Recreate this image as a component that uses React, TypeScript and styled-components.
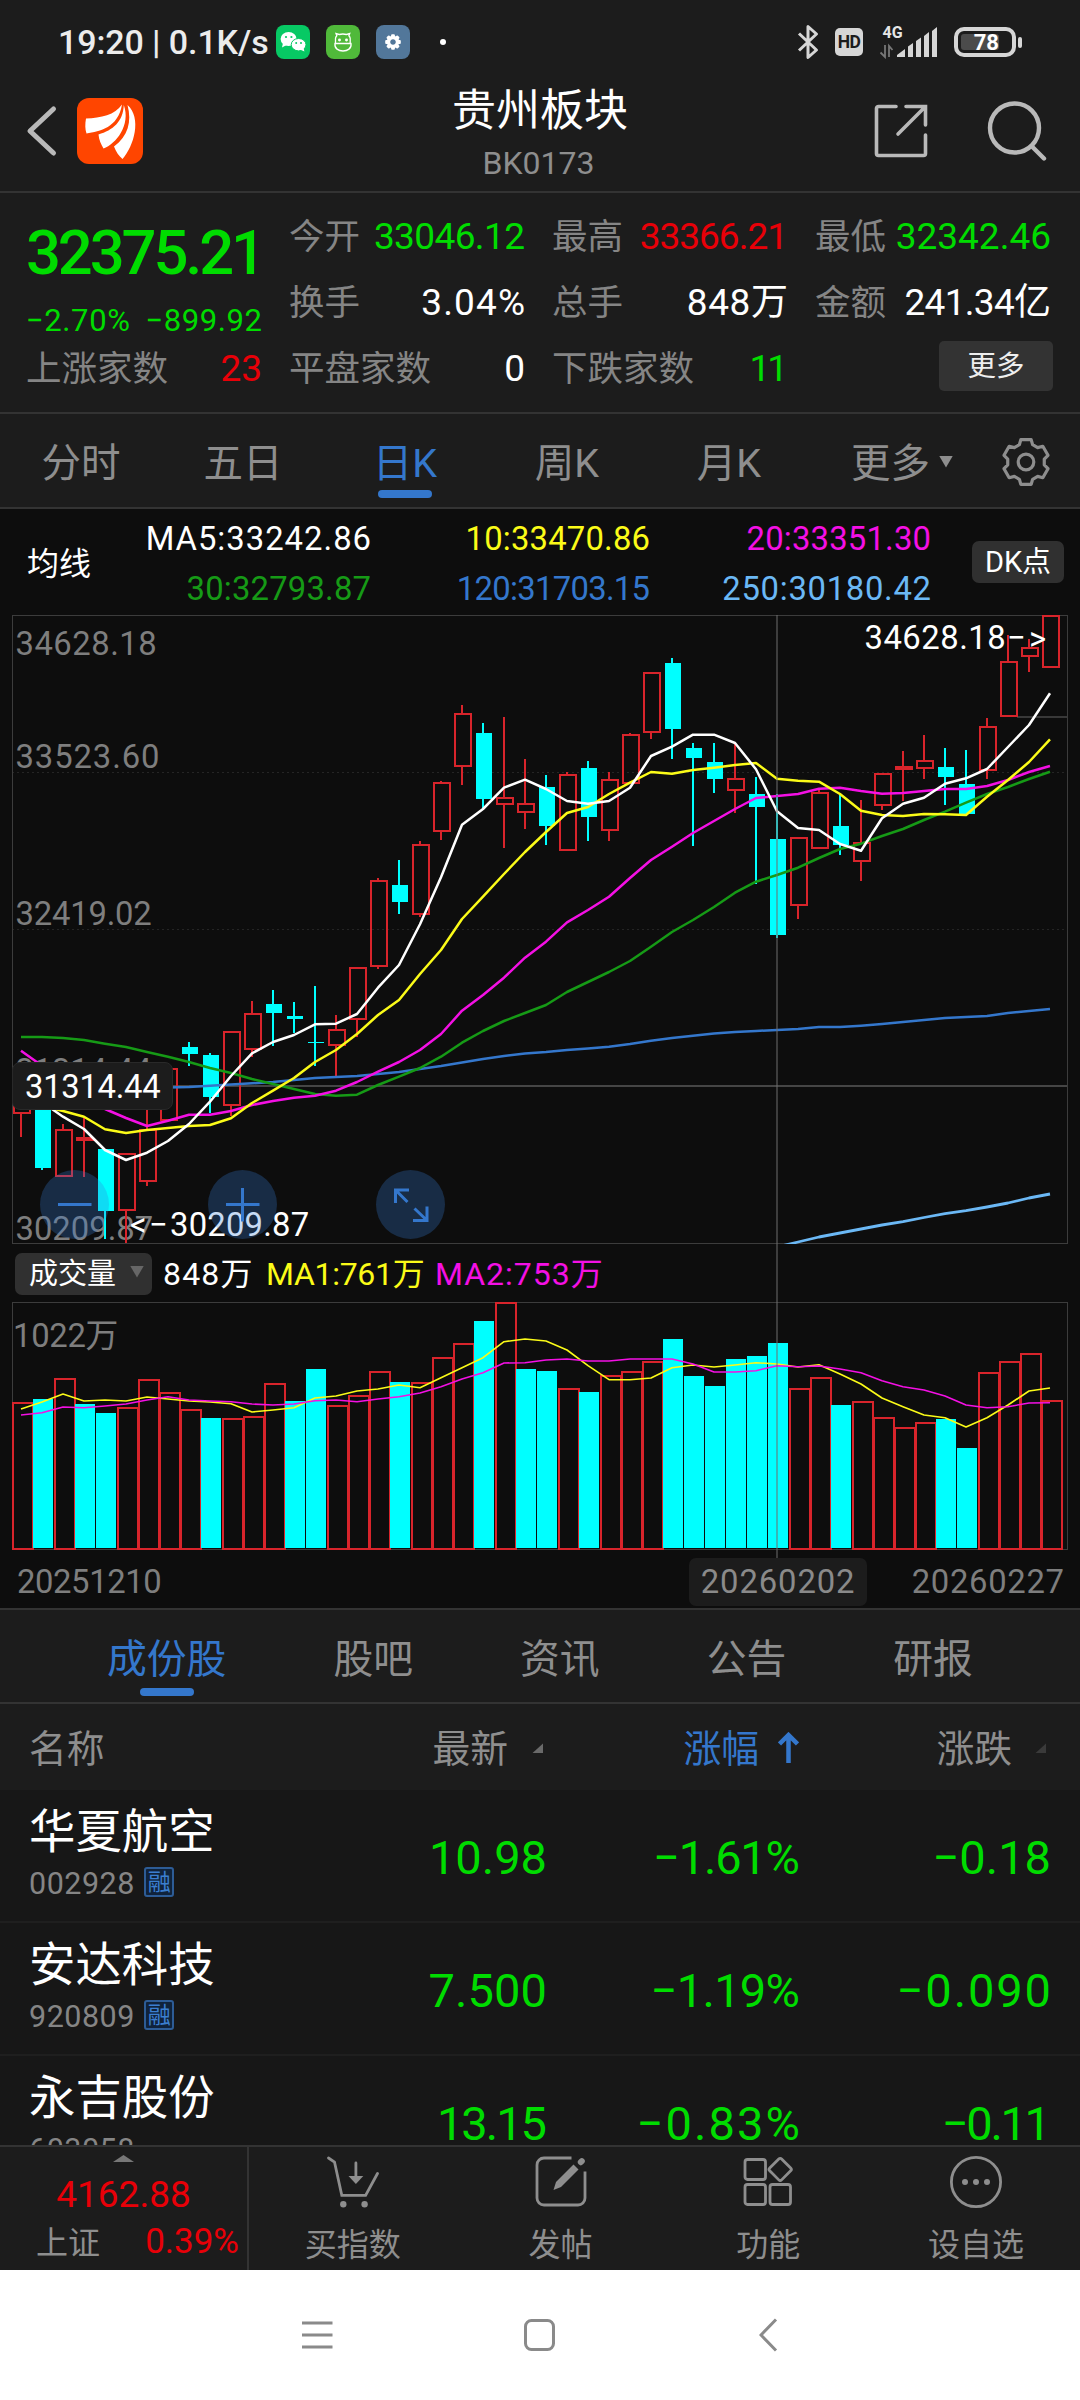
import React from "react";
import styled, { createGlobalStyle, css } from "styled-components";

const C = {
  panel: "#1c1c1c",
  chart: "#0d0d0d",
  row: "#171717",
  line: "#333333",
  gray: "#8e8e8e",
  label: "#858585",
  green: "#00dc00",
  red: "#e80008",
  blue: "#3477cc",
  white: "#ffffff",
  yellow: "#fbfb18",
  magenta: "#f410e4",
  darkGreen: "#169a16",
  sky: "#6bb8f5",
  cyan: "#00ffff",
  candle: "#d8242b",
};

const FONT = `Roboto, "Noto Sans CJK SC", sans-serif`;

const GlobalStyle = createGlobalStyle`
  * { box-sizing: border-box; }
  body { margin: 0; background: ${C.panel}; font-family: ${FONT}; }
`;

/* ---------- primitives ---------- */

const Screen = styled.div`
  width: 1080px;
  height: 2400px;
  overflow: hidden;
  display: flex;
  flex-direction: column;
  background: ${C.panel};
  white-space: nowrap;
`;

const Num = styled.span<{ $size: number; $color: string; $ls?: number; $weight?: number }>`
  font-size: ${(p) => p.$size}px;
  line-height: 1;
  color: ${(p) => p.$color};
  font-weight: ${(p) => p.$weight ?? 400};
  letter-spacing: ${(p) => p.$ls ?? 0}px;
  margin-right: ${(p) => -(p.$ls ?? 0)}px;
`;

const Cjk = styled.span<{ $size: number; $color?: string }>`
  font-size: ${(p) => p.$size}px;
  line-height: 1;
  padding-top: 3px;
  color: ${(p) => p.$color ?? C.gray};
`;

/* ---------- status bar ---------- */

const StatusBar = styled.div`
  height: 84px;
  flex: none;
  display: flex;
  align-items: center;
  justify-content: space-between;
  padding: 0 58px 0 58px;
`;
const StatusGroup = styled.div`
  display: flex;
  align-items: center;
`;
const AppTile = styled.div<{ $bg: string; $ml: number }>`
  width: 34px;
  height: 34px;
  border-radius: 8px;
  background: ${(p) => p.$bg};
  margin-left: ${(p) => p.$ml}px;
`;
const Dot = styled.div`
  width: 6px;
  height: 6px;
  border-radius: 3px;
  background: #fff;
  margin-left: 30px;
`;
const HdBox = styled.div`
  width: 28px;
  height: 28px;
  border-radius: 5px;
  background: #d6d6d6;
  color: #1c1c1c;
  font-size: 17.5px;
  font-weight: 700;
  line-height: 29px;
  text-align: center;
  letter-spacing: -0.6px;
  margin-left: 16px;
`;
const Battery = styled.div`
  width: 62px;
  height: 30px;
  border: 4px solid #d6d6d6;
  border-radius: 10px;
  padding: 3px;
  display: flex;
  margin-left: 16px;
`;
const BatteryFill = styled.div`
  width: 38px;
  background: #4b4b4b;
  border-radius: 3px;
  color: #fff;
  font-size: 22px;
  line-height: 17px;
  font-weight: 700;
  text-align: right;
`;
const Nub = styled.div`
  width: 4px;
  height: 11px;
  border-radius: 2px;
  background: #d6d6d6;
  margin-left: 2px;
`;

function Status() {
  return (
    <StatusBar>
      <StatusGroup>
        <Num $size={34} $color="#ececec" $weight={500} $ls={-0.1}>19:20 | 0.1K/s</Num>
        <AppTile $bg="#07c964" $ml={7}>
          <svg width="34" height="34" viewBox="0 0 34 34">
            <ellipse cx="12.6" cy="14" rx="8" ry="6.9" fill="#fff" />
            <path d="M7 18l-1 4.4 4.6-2.4z" fill="#fff" />
            <ellipse cx="22.6" cy="19.7" rx="7.4" ry="6.2" fill="#fff" stroke="#07c964" strokeWidth="1" />
            <path d="M24 24.5l4.4 2-.9-4z" fill="#fff" />
            <circle cx="10" cy="12" r="1.1" fill="#07c964" />
            <circle cx="15.4" cy="12" r="1.1" fill="#07c964" />
            <circle cx="20.2" cy="18" r="1" fill="#07c964" />
            <circle cx="25" cy="18" r="1" fill="#07c964" />
          </svg>
        </AppTile>
        <AppTile $bg="#50b93a" $ml={16}>
          <svg width="34" height="34" viewBox="0 0 34 34" fill="none" stroke="#fff" strokeWidth="1.3">
            <path d="M9.5 19v-5.5c0-1 .5-2 1.3-2.8L10 8.6l3.2.9c2.3-.6 5-.6 7.3 0l3.2-.9-.8 2.100c.8.8 1.300 1.800 1.300 2.800V19" />
            <path d="M9 18.500h16c.8 5-3.500 7.500-8 7.500s-8.800-2.500-8-7.500z" />
            <circle cx="13.500" cy="15" r=".8" fill="#fff" />
            <circle cx="20.500" cy="15" r=".8" fill="#fff" />
          </svg>
        </AppTile>
        <AppTile $bg="#52779a" $ml={16}>
          <svg width="34" height="34" viewBox="-17 -17 34 34">
            {[0, 45, 90, 135].map((a) => (
              <rect key={a} x="-1.900" y="-7.800" width="3.800" height="15.600" rx="1" fill="#fff" transform={`rotate(${a})`} />
            ))}
            <circle r="4.500" fill="#52779a" stroke="#fff" strokeWidth="3.400" />
          </svg>
        </AppTile>
        <Dot />
      </StatusGroup>
      <StatusGroup>
        <svg width="22" height="36" viewBox="0 0 22 36" fill="none" stroke="#d6d6d6" strokeWidth="3" strokeLinejoin="round">
          <path d="M2 9.500L19.500 26 11 33.500V2.500l8.500 7.500L2 26.500" />
        </svg>
        <HdBox>HD</HdBox>
        <svg width="59" height="34" viewBox="880 24 59 34" style={{ marginLeft: 16 }}>
          <text x="883.500" y="37" fontSize="16" fontWeight="700" fill="#e6e6e6" fontFamily="Roboto">4G</text>
          <path d="M886 44v12l-4.500-4.500M890 56V45l3.500 4" stroke="#777" strokeWidth="1.800" fill="none" />
          <path d="M898 56v-2l8-6v8zM909 56V45.500l5-3.500V56zM917 56V40l5-3.500V56zM925 56V35l5-4V56zM933 56V30l5-4V56z" fill="#d6d6d6" />
        </svg>
        <Battery><BatteryFill>78</BatteryFill></Battery>
        <Nub />
      </StatusGroup>
    </StatusBar>
  );
}

/* ---------- title bar ---------- */

const TitleBar = styled.header`
  height: 109px;
  flex: none;
  display: grid;
  grid-template-columns: 1fr auto 1fr;
  border-bottom: 2px solid ${C.line};
`;
const TitleSide = styled.div<{ $right?: boolean }>`
  display: flex;
  height: 94px;
  align-items: center;
  ${(p) =>
    p.$right
      ? css`
          justify-content: flex-end;
          gap: 59px;
          padding-right: 33px;
        `
      : css`
          gap: 19px;
          padding-left: 26px;
        `}
`;
const TitleText = styled.div`
  display: flex;
  flex-direction: column;
  align-items: center;
`;
const Title = styled.h1`
  margin: 0;
  font-size: 44px;
  font-weight: 400;
  line-height: 55px;
  color: #fff;
`;
const Code = styled.div`
  font-size: 32px;
  line-height: 48px;
  padding-right: 3px;
  color: ${C.gray};
`;

function Header() {
  return (
    <TitleBar>
      <TitleSide>
        <svg width="32" height="52" viewBox="0 0 32 52" fill="none" stroke="#b9b9b9" strokeWidth="5" strokeLinecap="round">
          <path d="M27.500 4L4 26l23.500 22" strokeLinejoin="round" />
        </svg>
        <svg width="66" height="66" viewBox="0 0 66 66">
          <rect width="66" height="66" rx="12" fill="#ff4500" />
          <g fill="#fff">
            <path d="M45 6.500C38 17 24 20 9 20.500C8 26 8 31 9.500 35.500C23 33 41 30 45 6.500z" />
            <path d="M46.800 7C46 24 36 32 21.500 36.500C22 42 24 46 26.500 50.500C39 46 54 27 46.800 7z" />
            <path d="M50.500 7C55 24 51 38 37 48.500C39 54 42 58 45.500 61C57 48 65 20 50.500 7z" />
          </g>
        </svg>
      </TitleSide>
      <TitleText>
        <Title>贵州板块</Title>
        <Code>BK0173</Code>
      </TitleText>
      <TitleSide $right>
        <svg width="54" height="54" viewBox="0 0 54 54" fill="none" stroke="#b9b9b9" strokeWidth="3.600">
          <path d="M22 2.500H4.500a2 2 0 0 0-2 2v45a2 2 0 0 0 2 2h45a2 2 0 0 0 2-2V31M32 2.500h19.500V21M51 3L24 30" strokeLinecap="round" />
        </svg>
        <svg width="60" height="60" viewBox="0 0 60 60" fill="none" stroke="#b9b9b9" strokeWidth="4.400" strokeLinecap="round">
          <circle cx="27.500" cy="27" r="24.500" />
          <path d="M44.500 45L57 57.500" />
        </svg>
      </TitleSide>
    </TitleBar>
  );
}

/* ---------- quote summary ---------- */

const Quote = styled.section`
  height: 221px;
  flex: none;
  padding: 10px 29px 11px 26px;
  display: grid;
  grid-template-columns: repeat(4, minmax(0, 1fr));
  grid-template-rows: repeat(3, 66px);
  column-gap: 27px;
  border-bottom: 2px solid ${C.line};
`;
const LastPrice = styled.div`
  grid-row: 1 / 3;
  display: flex;
  flex-direction: column;
  padding-top: 20px;
`;
const ChangeLine = styled.div`
  display: flex;
  justify-content: space-between;
  margin-top: 20px;
`;
const QuoteCell = styled.div`
  display: flex;
  align-items: center;
  justify-content: space-between;
`;
const MoreButton = styled.button`
  border: 0;
  margin-left: auto;
  margin-right: -2px;
  width: 114px;
  height: 50px;
  padding: 1px 0 0;
  border-radius: 5px;
  background: #333;
  color: #eee;
  font: 28.500px/46px ${FONT};
  transform: translateY(-2px);
`;

const QUOTE: { label: string; value: string; color: string; ls: number }[] = [
  { label: "今开", value: "33046.12", color: C.green, ls: -0.6 },
  { label: "最高", value: "33366.21", color: C.red, ls: -1 },
  { label: "最低", value: "32342.46", color: C.green, ls: 0 },
  { label: "换手", value: "3.04%", color: C.white, ls: 1.1 },
  { label: "总手", value: "848万", color: C.white, ls: 0.6 },
  { label: "金额", value: "241.34亿", color: C.white, ls: -0.7 },
  { label: "上涨家数", value: "23", color: C.red, ls: 0 },
  { label: "平盘家数", value: "0", color: C.white, ls: 0 },
  { label: "下跌家数", value: "11", color: C.green, ls: -3 },
];

function QuotePanel() {
  return (
    <Quote>
      <LastPrice>
        <Num $size={61.500} $color={C.green} $weight={500} $ls={-3.100}>32375.21</Num>
        <ChangeLine>
          <Num $size={31} $color={C.green} $ls={0.6}>−2.70%</Num>
          <Num $size={31} $color={C.green} $ls={0.6}>−899.92</Num>
        </ChangeLine>
      </LastPrice>
      {QUOTE.map((q) => (
        <QuoteCell key={q.label}>
          <Cjk $size={35.500} $color={C.label}>{q.label}</Cjk>
          <Num $size={37} $color={q.color} $ls={q.ls}>{q.value}</Num>
        </QuoteCell>
      ))}
      <QuoteCell>
        <MoreButton>更多</MoreButton>
      </QuoteCell>
    </Quote>
  );
}

/* ---------- period tabs ---------- */

const PeriodTabs = styled.nav`
  height: 95px;
  flex: none;
  display: grid;
  grid-template-columns: repeat(6, 162px) 1fr;
  border-bottom: 2px solid ${C.line};
`;
const Tab = styled.div<{ $active?: boolean }>`
  position: relative;
  display: flex;
  align-items: center;
  justify-content: center;
  font-size: 39.500px;
  line-height: 1;
  padding-top: 6px;
  color: ${(p) => (p.$active ? C.blue : C.gray)};
  ${(p) =>
    p.$active &&
    css`
      &::after {
        content: "";
        position: absolute;
        bottom: 9px;
        left: calc(50% - 27px);
        width: 54px;
        height: 8px;
        border-radius: 4px;
        background: ${C.blue};
      }
    `}
`;
const MoreTab = styled(Tab)`
  justify-content: flex-start;
  padding-left: 41px;
  gap: 9px;
`;
const TabIcon = styled.div`
  display: flex;
  align-items: center;
  padding: 2px 0 0 29px;
`;
const Triangle = styled.i<{ $w: number; $h: number; $color: string; $up?: boolean }>`
  width: ${(p) => p.$w}px;
  height: ${(p) => p.$h}px;
  margin-bottom: 4px;
  background: ${(p) => p.$color};
  clip-path: ${(p) => (p.$up ? "polygon(50% 0, 100% 100%, 0 100%)" : "polygon(0 0, 100% 0, 50% 100%)")};
`;

const gearPath =
  [0, 60, 120, 180, 240, 300]
    .flatMap((t) =>
      [
        [t - 21, 18.5],
        [t - 13, 23],
        [t + 13, 23],
        [t + 21, 18.5],
      ].map(([a, r]) => {
        const rad = ((a - 90) * Math.PI) / 180;
        return `${(r * Math.cos(rad)).toFixed(2)},${(r * Math.sin(rad)).toFixed(2)}`;
      })
    )
    .join(" ");

function Periods() {
  return (
    <PeriodTabs>
      <Tab>分时</Tab>
      <Tab>五日</Tab>
      <Tab $active>日K</Tab>
      <Tab>周K</Tab>
      <Tab>月K</Tab>
      <MoreTab>
        更多
        <Triangle $w={14} $h={12} $color={C.gray} />
      </MoreTab>
      <TabIcon>
        <svg width="50" height="50" viewBox="-25 -25 50 50" fill="none" stroke={C.gray} strokeWidth="3.200" strokeLinejoin="round">
          <polygon points={gearPath} />
          <circle r="7.800" />
        </svg>
      </TabIcon>
    </PeriodTabs>
  );
}

/* ---------- moving averages legend ---------- */

const Legend = styled.div`
  height: 106px;
  flex: none;
  background: ${C.chart};
  display: grid;
  grid-template-columns: 91px 280px 279px 281px 1fr;
  align-items: center;
  padding: 4px 0 0 0;
`;
const LegendTitle = styled.div`
  padding-left: 27px;
  font-size: 32px;
  line-height: 40px;
  color: #fff;
`;
const LegendCol = styled.div`
  display: flex;
  flex-direction: column;
  align-items: flex-end;
  gap: 17px;
`;
const Chip = styled.div`
  background: #303030;
  border-radius: 7px;
  color: #fff;
  display: flex;
  align-items: center;
`;
const DkChip = styled(Chip)`
  justify-self: end;
  margin: 0 16px 5px 0;
  width: 92px;
  height: 42px;
  font-size: 29px;
  line-height: 40px;
  justify-content: center;
`;

function MaLegend() {
  return (
    <Legend>
      <LegendTitle>均线</LegendTitle>
      <LegendCol>
        <Num $size={32.800} $color="#fff" $ls={1}>MA5:33242.86</Num>
        <Num $size={32.800} $color={C.darkGreen} $ls={0.2}>30:32793.87</Num>
      </LegendCol>
      <LegendCol>
        <Num $size={32.800} $color={C.yellow} $ls={0.2}>10:33470.86</Num>
        <Num $size={32.800} $color={C.blue} $ls={-0.7}>120:31703.15</Num>
      </LegendCol>
      <LegendCol>
        <Num $size={32.800} $color={C.magenta} $ls={0.2}>20:33351.30</Num>
        <Num $size={32.800} $color={C.sky} $ls={0.7}>250:30180.42</Num>
      </LegendCol>
      <DkChip>DK点</DkChip>
    </Legend>
  );
}

/* ---------- charts ---------- */

/* [rising, wick top, body top, body bottom, wick bottom] */
const CANDLES: number[][] = [
  [1, 1100, 1106, 1113, 1137], [0, 1096, 1100, 1168, 1170], [1, 1124, 1130, 1176, 1176], [1, 1118, 1138, 1140, 1177],
  [0, 1149, 1149, 1211, 1239], [1, 1153, 1154, 1210, 1243], [1, 1105, 1130, 1181, 1186], [1, 1068, 1069, 1120, 1121],
  [0, 1042, 1047, 1054, 1066], [0, 1053, 1055, 1097, 1113], [1, 1031, 1032, 1105, 1116], [1, 1001, 1014, 1049, 1057],
  [0, 990, 1004, 1013, 1046], [0, 1002, 1016, 1019, 1033], [0, 986, 1042, 1043, 1066], [1, 1015, 1030, 1045, 1076],
  [1, 967, 968, 1019, 1037], [1, 878, 881, 966, 969], [0, 860, 885, 902, 914], [1, 841, 845, 914, 917],
  [1, 781, 783, 831, 840], [1, 705, 714, 766, 785], [0, 723, 733, 799, 810], [1, 717, 798, 804, 848],
  [1, 759, 804, 812, 829], [0, 775, 787, 826, 845], [1, 772, 775, 850, 850], [0, 761, 768, 817, 841],
  [1, 772, 780, 830, 841], [1, 733, 735, 783, 783], [1, 672, 673, 732, 739], [0, 658, 663, 729, 759],
  [0, 743, 748, 758, 846], [0, 743, 762, 779, 793], [1, 744, 779, 790, 813], [0, 777, 794, 807, 884],
  [0, 794, 839, 935, 938], [1, 837, 838, 905, 919], [1, 789, 793, 848, 848], [0, 795, 826, 845, 855],
  [1, 800, 843, 861, 881], [1, 773, 774, 805, 810], [1, 751, 767, 769, 801], [1, 735, 761, 768, 779],
  [0, 748, 767, 777, 805], [0, 750, 784, 814, 814], [1, 718, 727, 770, 779], [1, 635, 662, 716, 716],
  [1, 639, 648, 656, 672], [1, 616, 616, 667, 667],
];

const VOLUME_TOPS = [
  1403, 1399, 1379, 1404, 1413, 1408, 1380, 1393, 1410, 1418, 1419, 1417, 1384, 1401, 1369, 1406, 1396, 1372, 1382, 1383,
  1358, 1344, 1321, 1303, 1369, 1371, 1389, 1392, 1376, 1372, 1362, 1339, 1376, 1386, 1359, 1356, 1343, 1389, 1378, 1405,
  1402, 1418, 1428, 1423, 1419, 1448, 1373, 1362, 1354, 1401,
];
const FALLING_VOLUME = new Set([1, 3, 4, 9, 13, 14, 18, 22, 24, 25, 27, 31, 32, 33, 34, 35, 36, 39, 44, 45]);

const MA5 = [
  1088, 1102, 1116.700, 1129, 1150, 1160, 1152.700, 1141, 1124, 1101.700, 1076, 1053.300, 1042, 1035, 1024.300, 1023.700, 1014,
  987.700, 965, 924.300, 877.300, 824.700, 809, 787.700, 779.700, 789, 801, 803.700, 801, 787.700, 756, 746.700, 734.700, 734.700,
  743, 769.300, 811.300, 828, 830, 844, 850.700, 818.300, 803.700, 797.700, 783.700, 778.300, 769, 747, 725, 693.300,
];
const MA10 = [
  1098, 1106, 1111, 1116.700, 1129.300, 1133, 1130, 1128, 1126, 1125, 1118.300, 1103, 1090.700, 1078, 1062, 1050, 1034, 1015,
  1000, 974, 950, 919, 896.700, 874, 852, 832, 813, 807, 794, 782.700, 772, 773.700, 770, 767.700, 765, 763, 778.700, 780.700,
  781.700, 794, 810.700, 815, 816, 814, 814.300, 815, 796.700, 780, 762, 739.300,
];
const MA20 = [
  1050.700, 1065.700, 1083, 1098, 1109, 1118, 1126, 1120.700, 1114.700, 1114.700, 1111, 1105, 1101, 1097.700, 1095.700, 1090.700,
  1082, 1071.700, 1062, 1050, 1034, 1010.700, 995, 977.700, 957.700, 941.700, 922.300, 910, 896.700, 878, 860, 846.700, 833, 821,
  809, 798, 796, 794, 788.700, 787.700, 791, 793.700, 793, 791, 789, 789, 786, 780, 772, 766,
];
const MA30 = [
  1037, 1037, 1038, 1040, 1043.700, 1047, 1052, 1056.700, 1062, 1068, 1073, 1079, 1084, 1089, 1094, 1095.700, 1094.700, 1085,
  1076.700, 1068, 1056.700, 1042.700, 1031, 1021, 1013, 1005, 992, 982, 972, 961, 946.700, 932, 920, 907, 892.700, 881.700, 875,
  867.700, 858, 849, 843.700, 836, 829, 820, 811.700, 802.700, 794, 787, 779, 771.700,
];
const MA120 = [
  1087.500, 1087, 1085.700, 1084.500, 1083.300, 1082, 1080, 1078, 1077, 1076, 1074, 1072, 1069, 1066, 1062.500, 1059, 1056, 1053.500,
  1052, 1050, 1048.500, 1046.700, 1044, 1040.700, 1038, 1035.700, 1033.500, 1032, 1031, 1030, 1029, 1027, 1027, 1025.700, 1024,
  1022, 1020, 1018, 1017, 1016, 1013, 1011, 1009,
];
const MA250 = [1247, 1242, 1237, 1233, 1229, 1225, 1221.700, 1217.500, 1213.700, 1210.700, 1207, 1203, 1198, 1194];
const VOL5 = [
  1409, 1402, 1394, 1401, 1400, 1401, 1397, 1399, 1401, 1402, 1403.700, 1412, 1410, 1407.700, 1398, 1396, 1391, 1389, 1385,
  1387.700, 1377.700, 1367.700, 1357.700, 1341.700, 1339, 1341, 1350, 1365.700, 1379.700, 1379.700, 1378, 1367.700, 1365, 1367,
  1365, 1362.700, 1364, 1367, 1364.700, 1374, 1384, 1398, 1406.700, 1415, 1417.700, 1427, 1417.700, 1405, 1391, 1388,
];
const VOL10 = [
  1415, 1412.700, 1407, 1407.700, 1406, 1404, 1400, 1396.700, 1400, 1401, 1401.700, 1404, 1405, 1404, 1400.700, 1400, 1401.700,
  1399, 1396.700, 1393, 1386.700, 1379, 1372.700, 1363, 1362.700, 1360, 1359, 1361, 1361, 1359, 1359, 1359, 1364, 1372, 1372,
  1370.700, 1365.700, 1366.700, 1366, 1369, 1372.700, 1380.700, 1386.700, 1390, 1396, 1405, 1407.700, 1406.700, 1403, 1402.700,
];

const PITCH = 21;
const cx = (i: number) => 21 + i * PITCH;
const points = (ys: number[], from = 0) => ys.map((y, i) => `${cx(i + from)},${y}`).join(" ");

const ChartArea = styled.section`
  position: relative;
  flex: none;
  height: 993px;
  background: ${C.chart};
  display: flex;
  flex-direction: column;
`;
const ChartSvg = styled.svg`
  display: block;
  flex: none;
  text {
    font-family: ${FONT};
    font-size: 32.800px;
  }
`;
const VolumeHeader = styled.div`
  height: 58px;
  flex: none;
  display: flex;
  align-items: center;
  padding: 1px 0 0 15px;
`;
const VolumeChip = styled(Chip)`
  width: 137px;
  height: 42px;
  padding: 0 8px 0 14px;
  justify-content: space-between;
  font-size: 29px;
  line-height: 42px;
  margin-right: 11px;
`;
const VolumeValue = styled(Num)<{ $w: number }>`
  width: ${(p) => p.$w}px;
  margin-right: 0;
  padding-top: 1px;
`;
const DateRow = styled.div`
  flex: 1;
  display: flex;
  align-items: center;
  padding: 5px 16px 0 17px;
`;
const DateChip = styled(Chip)`
  width: 178px;
  height: 48px;
  margin: 0 45px 0 auto;
  background: ${C.panel};
  justify-content: center;
`;
const CrossX = styled.div`
  position: absolute;
  left: 776px;
  top: 0;
  width: 2px;
  height: 943px;
  background: rgba(110, 110, 110, 0.5);
`;
const PriceTip = styled.div`
  position: absolute;
  left: 12px;
  top: 447px;
  width: 161px;
  height: 48px;
  border-radius: 8px;
  border: 1px solid #292929;
  background: ${C.panel};
  display: flex;
  align-items: center;
  padding: 3px 0 0 12px;
`;
const ZoomButtons = styled.div`
  position: absolute;
  left: 39.500px;
  top: 555px;
  display: flex;
  gap: 99px;
`;
const ZoomButton = styled.button`
  width: 69px;
  height: 69px;
  border: 0;
  padding: 0;
  border-radius: 50%;
  background: rgba(54, 124, 214, 0.28);
  svg { display: block; }
`;

function Charts() {
  return (
    <ChartArea>
      <ChartSvg width="1080" height="629" viewBox="0 615 1080 629">
        <g shapeRendering="crispEdges" fill="none">
          <path d="M12 772.500H1067M12 929.500H1067" stroke="#252525" strokeDasharray="2 3" />
          <path d="M12 1086H1067" stroke="#454545" strokeWidth="2" />
          <path d="M1017 717H1067" stroke="#383838" strokeWidth="2" />
          <path d="M12.500 615.500H1067.500V1243.500H12.500z" stroke="#3c3c3c" />
        </g>
        <g fill="#7e7e7e" letterSpacing="0.5">
          <text x="15.500" y="655">34628.18</text>
          <text x="15.500" y="768" letterSpacing="0.9">33523.60</text>
          <text x="15.500" y="925" letterSpacing="-0.2">32419.02</text>
          <text x="15.500" y="1082" letterSpacing="-0.2">31314.44</text>
          <text x="15.500" y="1240" letterSpacing="0">30209.87</text>
        </g>
        <g shapeRendering="crispEdges">
          {CANDLES.map(([up, hi, top, bottom, lo], i) => {
            const x = cx(i);
            return up ? (
              <g key={i} stroke={C.candle} strokeWidth="2" fill="none">
                <path d={`M${x} ${hi}V${top}M${x} ${bottom}V${lo}`} />
                <rect x={x - 7} y={top} width="16" height={bottom - top} />
              </g>
            ) : (
              <g key={i} fill={C.cyan}>
                <rect x={x - 1} y={hi} width="2" height={lo - hi} />
                <rect x={x - 7} y={top} width="16" height={bottom - top} />
              </g>
            );
          })}
        </g>
        <g fill="none" strokeWidth="2.500" strokeLinejoin="round">
          <polyline points={points(MA120, 7)} stroke={C.blue} />
          <polyline points={points(MA250, 36)} stroke={C.sky} strokeWidth="2.800" />
          <polyline points={points(MA30)} stroke={C.darkGreen} />
          <polyline points={points(MA20)} stroke={C.magenta} />
          <polyline points={points(MA10)} stroke={C.yellow} />
          <polyline points={points(MA5)} stroke="#fff" />
        </g>
        <g fill="#fff">
          <text x="864.500" y="649" letterSpacing="0.5">34628.18</text>
          <text x="1007" y="649">−</text>
          <text x="1029" y="650">&gt;</text>
          <text x="130" y="1236">&lt;</text>
          <text x="149" y="1236">−</text>
          <text x="170" y="1236" letterSpacing="0.200">30209.87</text>
        </g>
      </ChartSvg>

      <VolumeHeader>
        <VolumeChip>
          成交量
          <Triangle $w={14} $h={12} $color="#666" />
        </VolumeChip>
        <VolumeValue $w={103} $size={32} $color="#fff" $ls={1.200}>848万</VolumeValue>
        <VolumeValue $w={169} $size={32} $color={C.yellow} $ls={-0.3}>MA1:761万</VolumeValue>
        <VolumeValue $w={170} $size={32} $color={C.magenta} $ls={1}>MA2:753万</VolumeValue>
      </VolumeHeader>

      <ChartSvg width="1080" height="249" viewBox="0 1302 1080 249">
        <path d="M12.500 1302.500H1067.500V1549.500H12.500z" stroke="#3c3c3c" fill="none" shapeRendering="crispEdges" />
        <g shapeRendering="crispEdges">
          {VOLUME_TOPS.map((top, i) => {
            const x = 12 + i * PITCH;
            return FALLING_VOLUME.has(i) ? (
              <rect key={i} x={x} y={top} width="20" height={1548 - top} fill={C.cyan} />
            ) : (
              <rect key={i} x={x + 1} y={top} width="20" height={1549 - top} fill="none" stroke={C.candle} strokeWidth="2" />
            );
          })}
        </g>
        <g fill="none" strokeWidth="1.600" strokeLinejoin="round">
          <polyline points={points(VOL5)} stroke={C.yellow} />
          <polyline points={points(VOL10)} stroke={C.magenta} />
        </g>
        <text x="13" y="1347" fill="#7e7e7e" letterSpacing="-0.3">1022万</text>
      </ChartSvg>

      <DateRow>
        <Num $size={32.800} $color="#7e7e7e" $ls={-0.4}>20251210</Num>
        <DateChip>
          <Num $size={32.800} $color="#8a8a8a" $ls={0.9}>20260202</Num>
        </DateChip>
        <Num $size={32.800} $color="#7e7e7e" $ls={0.7}>20260227</Num>
      </DateRow>

      <CrossX />
      <PriceTip>
        <Num $size={32.800} $color="#fff" $ls={-0.3}>31314.44</Num>
      </PriceTip>
      <ZoomButtons>
        <ZoomButton>
          <svg width="69" height="69" viewBox="0 0 69 69" stroke={C.blue} strokeWidth="3"><path d="M18 34.500h33.500" /></svg>
        </ZoomButton>
        <ZoomButton>
          <svg width="69" height="69" viewBox="0 0 69 69" stroke={C.blue} strokeWidth="3"><path d="M18 34.500h33.500M34.500 18v33.500" /></svg>
        </ZoomButton>
        <ZoomButton>
          <svg width="69" height="69" viewBox="0 0 69 69" stroke={C.blue} strokeWidth="3" fill="none">
            <path d="M33 20H19.500V33M20 20.500L31.500 32M51 36.500V50.500H37M50.500 50L38.500 38.500" />
          </svg>
        </ZoomButton>
      </ZoomButtons>
    </ChartArea>
  );
}

/* ---------- constituents ---------- */

const SectionTabs = styled.nav`
  height: 96px;
  flex: none;
  display: flex;
  justify-content: space-evenly;
  border-top: 2px solid ${C.line};
  border-bottom: 2px solid ${C.line};
`;
const SectionTab = styled(Tab)`
  font-size: 39.800px;
  padding-top: 7px;
  &::after { bottom: 6px; }
`;
const TableHead = styled.div`
  height: 86px;
  flex: none;
  display: grid;
  grid-template-columns: 543px 256px 281px;
  align-items: center;
  padding-top: 3px;
`;
const HeadFirst = styled.div`
  display: flex;
  align-items: center;
  justify-content: space-between;
  padding-left: 29px;
`;
const HeadCell = styled.div<{ $gap: number; $pr?: number }>`
  display: flex;
  align-items: center;
  justify-content: flex-end;
  gap: ${(p) => p.$gap}px;
  padding-right: ${(p) => p.$pr ?? 0}px;
`;
const SortMark = styled.i<{ $dim?: boolean }>`
  width: 11px;
  height: 10px;
  background: ${(p) => (p.$dim ? "#3a3a3a" : "#6a6a6a")};
  clip-path: polygon(100% 0, 100% 100%, 0 100%);
`;
const Rows = styled.div`
  flex: none;
  height: 355px;
  overflow: hidden;
  background: ${C.row};
`;
const StockRow = styled.div`
  height: 133px;
  display: grid;
  grid-template-columns: 302px 245px 253px 251px;
  border-bottom: 2px solid #1f1f1f;
`;
const NameCell = styled.div`
  padding: 17px 0 0 29px;
`;
const StockName = styled.div`
  font-size: 46.400px;
  line-height: 50px;
  color: #fff;
`;
const StockMeta = styled.div`
  display: flex;
  align-items: flex-end;
  height: 30px;
  gap: 10px;
  margin-top: 10px;
`;
const StockCode = styled(Num)`
  line-height: 27px;
`;
const Badge = styled.span`
  width: 30px;
  height: 30px;
  border: 2px solid #2d5c96;
  border-radius: 3px;
  background: #10233b;
  color: #3b7fd0;
  font-size: 23px;
  line-height: 27px;
  display: flex;
  justify-content: center;
`;
const ValueCell = styled.div`
  display: flex;
  justify-content: flex-end;
  align-items: center;
  padding-top: 3px;
`;

type Cell = [string, number];
const STOCKS: { name: string; code: string; margin: boolean; cells: Cell[] }[] = [
  { name: "华夏航空", code: "002928", margin: true, cells: [["10.98", 0], ["−1.61%", -1.2], ["−0.18", 0]] },
  { name: "安达科技", code: "920809", margin: true, cells: [["7.500", 0.1], ["−1.19%", -0.7], ["−0.090", 1.9]] },
  { name: "永吉股份", code: "603058", margin: false, cells: [["13.15", -2], ["−0.83%", 2.1], ["−0.11", -2.3]] },
];

function Constituents() {
  return (
    <>
      <SectionTabs>
        <SectionTab $active>成份股</SectionTab>
        <SectionTab>股吧</SectionTab>
        <SectionTab>资讯</SectionTab>
        <SectionTab>公告</SectionTab>
        <SectionTab>研报</SectionTab>
      </SectionTabs>
      <TableHead>
        <HeadFirst>
          <Cjk $size={37.800}>名称</Cjk>
          <HeadCell $gap={24}>
            <Cjk $size={37.800}>最新</Cjk>
            <SortMark />
          </HeadCell>
        </HeadFirst>
        <HeadCell $gap={19}>
          <Cjk $size={37.800} $color={C.blue}>涨幅</Cjk>
          <svg width="21" height="32" viewBox="0 0 21 32" fill="none" stroke={C.blue} strokeWidth="4.500">
            <path d="M10.500 31V3M1.500 12l9-9 9 9" />
          </svg>
        </HeadCell>
        <HeadCell $gap={23} $pr={34}>
          <Cjk $size={37.800}>涨跌</Cjk>
          <SortMark $dim />
        </HeadCell>
      </TableHead>
      <Rows>
        {STOCKS.map((s) => (
          <StockRow key={s.code}>
            <NameCell>
              <StockName>{s.name}</StockName>
              <StockMeta>
                <StockCode $size={30.500} $color={C.label} $ls={0.5}>{s.code}</StockCode>
                {s.margin && <Badge>融</Badge>}
              </StockMeta>
            </NameCell>
            {s.cells.map(([v, ls]) => (
              <ValueCell key={v}>
                <Num $size={47} $color={C.green} $ls={ls}>{v}</Num>
              </ValueCell>
            ))}
          </StockRow>
        ))}
      </Rows>
    </>
  );
}

/* ---------- bottom bar ---------- */

const BottomBar = styled.footer`
  height: 125px;
  flex: none;
  display: grid;
  grid-template-columns: 249px repeat(4, 1fr);
  border-top: 2px solid ${C.line};
`;
const IndexBox = styled.div`
  border-right: 2px solid ${C.line};
  display: flex;
  flex-direction: column;
  align-items: center;
  padding-top: 8px;
`;
const IndexValue = styled.div`
  display: flex;
  margin-top: 10px;
`;
const IndexLine = styled.div`
  align-self: stretch;
  display: flex;
  align-items: center;
  justify-content: space-between;
  padding: 0 8px 0 36px;
  margin-top: 11px;
`;
const Action = styled.div`
  display: flex;
  flex-direction: column;
  align-items: center;
  padding-top: 9px;
  gap: 18px;
`;

function Bottom() {
  const ico = { width: 52, height: 52, viewBox: "0 0 52 52", fill: "none", stroke: C.gray, strokeWidth: 2.8 };
  return (
    <BottomBar>
      <IndexBox>
        <Triangle $w={21} $h={7} $color="#777" $up />
        <IndexValue>
          <Num $size={37} $color={C.red}>4162.88</Num>
        </IndexValue>
        <IndexLine>
          <Cjk $size={32}>上证</Cjk>
          <Num $size={35} $color={C.red}>0.39%</Num>
        </IndexLine>
      </IndexBox>
      <Action>
        <svg {...ico} strokeLinecap="round">
          <path d="M1.500 2l6 4 7.300 33.300h23.800L50.500 17.500M28.900 7v13" />
          <path d="M21.500 20h14.800l-7.400 8z" fill={C.gray} stroke="none" />
          <circle cx="16.300" cy="48.300" r="3.200" fill={C.gray} stroke="none" />
          <circle cx="37.600" cy="48.300" r="3.200" fill={C.gray} stroke="none" />
        </svg>
        <Cjk $size={32}>买指数</Cjk>
      </Action>
      <Action>
        <svg {...ico}>
          <path d="M36.500 2H9a7 7 0 0 0-7 7v33a7 7 0 0 0 7 7h34a7 7 0 0 0 7-7V15.500" />
          <path d="M18.500 34l2.500-8L38.500 8.500l5 5L26 31z" fill={C.gray} stroke="none" />
          <path d="M45.800 6.200l1-1" strokeWidth="6" strokeLinecap="round" />
        </svg>
        <Cjk $size={32}>发帖</Cjk>
      </Action>
      <Action>
        <svg {...ico}>
          <rect x="3" y="3.500" width="20.500" height="20" rx="2.500" />
          <rect x="3" y="28.500" width="20.500" height="20" rx="2.500" />
          <rect x="28" y="28.500" width="20.500" height="20" rx="2.500" />
          <rect x="29.800" y="5" width="16.800" height="16.800" rx="2" transform="rotate(45 38.200 13.400)" />
        </svg>
        <Cjk $size={32}>功能</Cjk>
      </Action>
      <Action>
        <svg {...ico}>
          <circle cx="26" cy="26" r="24.600" />
          {[15, 26, 37].map((x) => (
            <circle key={x} cx={x} cy="26" r="3" fill={C.gray} stroke="none" />
          ))}
        </svg>
        <Cjk $size={32}>设自选</Cjk>
      </Action>
    </BottomBar>
  );
}

const SystemNav = styled.div`
  flex: 1;
  background: #fff;
  display: grid;
  grid-template-columns: 302px 222px 235px 1fr;
  align-items: center;
  svg { grid-row: 1; }
`;

function NavKeys() {
  const stroke = { fill: "none", stroke: "#8a8a8a", strokeWidth: 3 };
  return (
    <SystemNav>
      <svg width="31" height="32" viewBox="0 0 31 32" {...stroke} style={{ gridColumn: 2 }}>
        <path d="M0 4h30.500M0 16h30.500M0 28h30.500" />
      </svg>
      <svg width="31" height="32" viewBox="0 0 31 32" {...stroke} style={{ gridColumn: 3 }}>
        <rect x="1.500" y="1.500" width="28" height="29" rx="6" />
      </svg>
      <svg width="19" height="34" viewBox="0 0 19 34" {...stroke} style={{ gridColumn: 4 }}>
        <path d="M17 1.500L2 17l15 15.500" />
      </svg>
    </SystemNav>
  );
}

export default function App() {
  return (
    <Screen>
      <GlobalStyle />
      <Status />
      <Header />
      <QuotePanel />
      <Periods />
      <MaLegend />
      <Charts />
      <Constituents />
      <Bottom />
      <NavKeys />
    </Screen>
  );
}
